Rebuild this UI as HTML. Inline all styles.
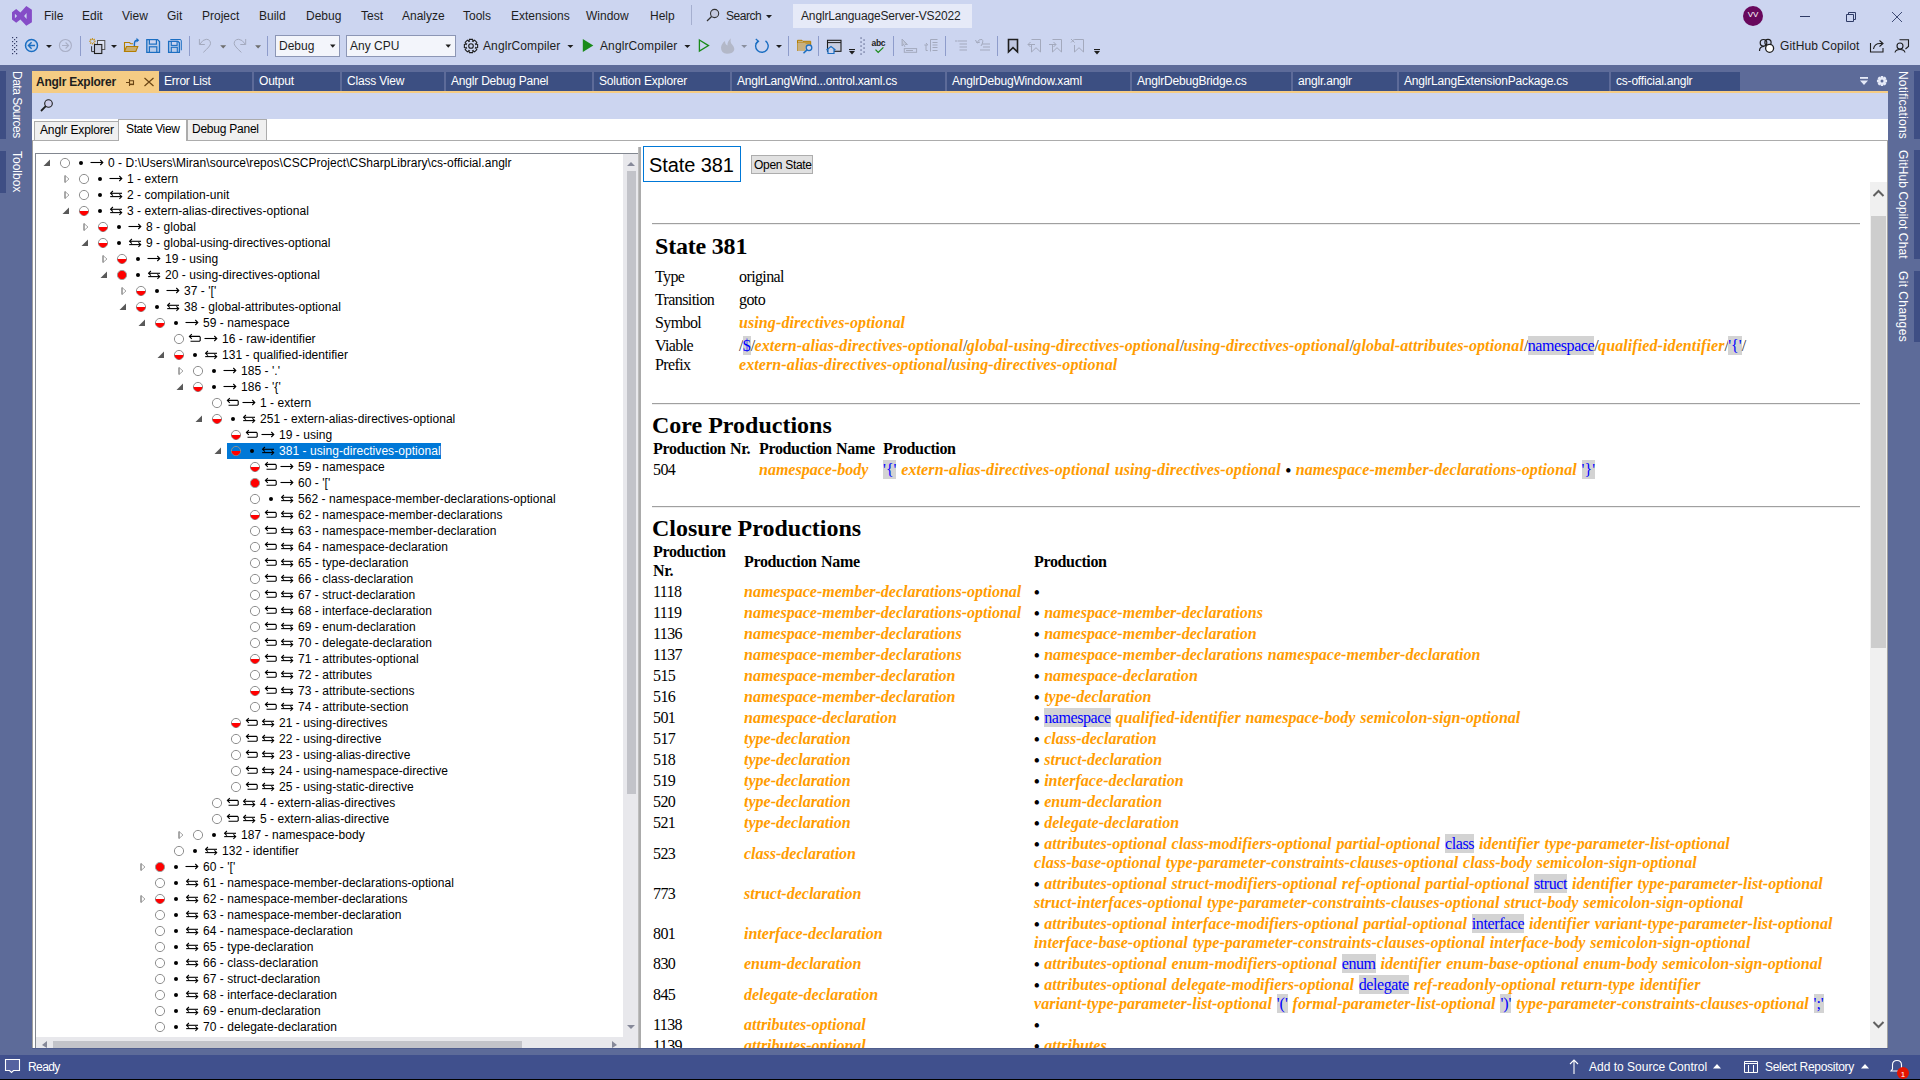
<!DOCTYPE html><html><head><meta charset="utf-8"><style>
*{box-sizing:border-box;margin:0;padding:0}
html,body{width:1920px;height:1080px;overflow:hidden;background:#CCD5F0;font-family:"Liberation Sans",sans-serif;font-size:12px;color:#1E1E1E;position:relative}
.a{position:absolute}
.t{position:absolute;white-space:pre;line-height:16px}
.vt{position:absolute;writing-mode:vertical-rl;white-space:pre;font-size:12px;color:#fff;line-height:12px}
.tab{position:absolute;top:72px;height:19px;background:#3C4F82;color:#fff;line-height:19px;padding-left:5px;white-space:pre;overflow:hidden;letter-spacing:-0.2px}
.tr{position:absolute;height:16px;line-height:16px;white-space:pre;color:#000;font-size:12px;letter-spacing:0.05px}
.sr{position:absolute;white-space:pre;font-family:"Liberation Serif",serif;font-size:16px;line-height:19px;color:#000;word-spacing:0.8px}
.ob{font-weight:bold;font-style:italic;color:#FF9C00;letter-spacing:var(--ls,0.1px)}
.bu{font-size:16px;line-height:16px;letter-spacing:-0.3px;position:relative;top:1px;font-weight:bold}
.tm{color:#0000FF;background:#D3D3D3;display:inline-block;height:19px;line-height:19px;vertical-align:top}
.tw{letter-spacing:-0.4px}
.tms{color:#0000FF;background:#D3D3D3;letter-spacing:-0.5px}
</style></head><body><div class="a" style="left:0;top:65px;width:1920px;height:990px;background:#5D6B99"></div><div class="a" style="left:0;top:1055px;width:1920px;height:25px;background:#40508D"></div><div class="a" style="left:0;top:71px;width:6px;height:68px;background:#3E4E84"></div><div class="a" style="left:0;top:151px;width:6px;height:42px;background:#3E4E84"></div><div class="vt" style="left:11px;top:71px;letter-spacing:-0.5px">Data Sources</div><div class="vt" style="left:11px;top:151px">Toolbox</div><div class="a" style="left:1914px;top:71px;width:6px;height:68px;background:#3E4E84"></div><div class="vt" style="left:1897px;top:71px;letter-spacing:0.2px">Notifications</div><div class="a" style="left:1914px;top:150px;width:6px;height:109px;background:#3E4E84"></div><div class="vt" style="left:1897px;top:150px;letter-spacing:0.1px">GitHub Copilot Chat</div><div class="a" style="left:1914px;top:271px;width:6px;height:71px;background:#3E4E84"></div><div class="vt" style="left:1897px;top:271px;letter-spacing:0.4px">Git Changes</div><div class="a" style="left:32px;top:71px;width:127px;height:22px;background:#F5CC84"></div><div class="t" style="left:36px;top:74px;color:#1E1E1E;font-weight:bold;letter-spacing:-0.25px">Anglr Explorer</div><div class="tab" style="left:159px;width:93px">Error List</div><div class="tab" style="left:254px;width:86px">Output</div><div class="tab" style="left:342px;width:102px">Class View</div><div class="tab" style="left:446px;width:146px">Anglr Debug Panel</div><div class="tab" style="left:594px;width:136px">Solution Explorer</div><div class="tab" style="left:732px;width:213px">AnglrLangWind...ontrol.xaml.cs</div><div class="tab" style="left:947px;width:183px">AnglrDebugWindow.xaml</div><div class="tab" style="left:1132px;width:159px">AnglrDebugBridge.cs</div><div class="tab" style="left:1293px;width:104px">anglr.anglr</div><div class="tab" style="left:1399px;width:210px">AnglrLangExtensionPackage.cs</div><div class="tab" style="left:1611px;width:129px">cs-official.anglr</div><div class="a" style="left:32px;top:91px;width:1856px;height:2px;background:#F5CC84"></div><div class="a" style="left:32px;top:93px;width:1856px;height:26px;background:#CCD5F0"></div><div class="a" style="left:32px;top:119px;width:1856px;height:929px;background:#fff"></div><div class="a" style="left:1887px;top:140px;width:1px;height:908px;background:#A0A0A0"></div><div class="a" style="left:32px;top:140px;width:1px;height:908px;background:#A0A0A0"></div><div class="a" style="left:32px;top:140px;width:1856px;height:1px;background:#ACACAC"></div><div class="a" style="left:34px;top:121px;width:85px;height:20px;background:#F0F0F0;border:1px solid #ACACAC"></div><div class="a" style="left:187px;top:119px;width:80px;height:22px;background:#F0F0F0;border:1px solid #ACACAC"></div><div class="a" style="left:118px;top:119px;width:69px;height:22px;background:#fff;border:1px solid #ACACAC;border-bottom:none"></div><div class="t" style="left:40px;top:122px;color:#000;letter-spacing:-0.15px">Anglr Explorer</div><div class="t" style="left:126px;top:121px;color:#000;letter-spacing:-0.36px">State View</div><div class="t" style="left:192px;top:121px;color:#000;letter-spacing:-0.24px">Debug Panel</div><div class="a" style="left:35px;top:153px;width:603px;height:895px;border:1px solid #828790;border-right:none;border-bottom:none"></div><div class="a" style="left:638px;top:147px;width:3px;height:901px;background:#ABABAB;border-left:1px solid #BDBDBD"></div><div class="t" style="left:28px;top:1059px;color:#fff;font-size:12px;letter-spacing:-0.6px">Ready</div><svg width="0" height="0" style="position:absolute"><defs>
<g id="ex"><polygon points="0.5,11 7,11 7,4.5" fill="#595959"/></g>
<g id="co"><polygon points="3,4.5 3,11.5 7,8" fill="none" stroke="#A6A6A6" stroke-width="1"/><path d="M3,4.5 V11.5" stroke="#808080" stroke-width="1"/></g>
<g id="c0"><circle cx="22" cy="8" r="4.6" fill="none" stroke="#8F8F8F" stroke-width="1"/></g>
<g id="c1"><circle cx="22" cy="8" r="4.6" fill="none" stroke="#8F8F8F" stroke-width="1"/><path d="M17.6,8 H26.4 A4.4,4.4 0 0 1 17.6,8 Z" fill="#FF0000"/></g>
<g id="c2"><circle cx="22" cy="8" r="4.6" fill="#FF0000" stroke="#9A9A9A" stroke-width="1"/></g>
<g id="dt"><circle cx="38" cy="8" r="2" fill="#000"/></g>
<g id="bk" fill="none" stroke="#000" stroke-width="1.1"><path d="M32.5,5.4 H42.4 L43.2,6.2 V9.5 L42.4,10.3 H33.5"/><path d="M34.8,3.2 L32.4,5.5 L34.8,7.8"/></g>
<g id="ar" fill="none" stroke="#000" stroke-width="1.1"><path d="M47.5,7.5 H59.6"/><path d="M57.3,5 L59.8,7.5 L57.3,10"/></g>
<g id="db" fill="none" stroke="#000" stroke-width="1.1"><path d="M48.6,6.3 H60"/><path d="M50.9,4 L48.6,6.3 L50.9,8.6"/><path d="M48.2,9.6 H59.7"/><path d="M57.4,7.3 L59.7,9.6 L57.4,11.9"/></g>
</defs></svg><div class="a" style="left:227px;top:443px;width:214px;height:16px;background:#0078D7"></div><div class="a" style="left:36px;top:154px;width:587px;height:883px;overflow:hidden"><div class="a" style="left:-36px;top:-154px;width:640px;height:1048px"><div class="tr" style="left:108px;top:155px;color:#000">0 - D:\Users\Miran\source\repos\CSCProject\CSharpLibrary\cs-official.anglr</div><div class="tr" style="left:127px;top:171px;color:#000">1 - extern</div><div class="tr" style="left:127px;top:187px;color:#000">2 - compilation-unit</div><div class="tr" style="left:127px;top:203px;color:#000">3 - extern-alias-directives-optional</div><div class="tr" style="left:146px;top:219px;color:#000">8 - global</div><div class="tr" style="left:146px;top:235px;color:#000">9 - global-using-directives-optional</div><div class="tr" style="left:165px;top:251px;color:#000">19 - using</div><div class="tr" style="left:165px;top:267px;color:#000">20 - using-directives-optional</div><div class="tr" style="left:184px;top:283px;color:#000">37 - &#x27;[&#x27;</div><div class="tr" style="left:184px;top:299px;color:#000">38 - global-attributes-optional</div><div class="tr" style="left:203px;top:315px;color:#000">59 - namespace</div><div class="tr" style="left:222px;top:331px;color:#000">16 - raw-identifier</div><div class="tr" style="left:222px;top:347px;color:#000">131 - qualified-identifier</div><div class="tr" style="left:241px;top:363px;color:#000">185 - &#x27;.&#x27;</div><div class="tr" style="left:241px;top:379px;color:#000">186 - &#x27;{&#x27;</div><div class="tr" style="left:260px;top:395px;color:#000">1 - extern</div><div class="tr" style="left:260px;top:411px;color:#000">251 - extern-alias-directives-optional</div><div class="tr" style="left:279px;top:427px;color:#000">19 - using</div><div class="tr" style="left:279px;top:443px;color:#fff">381 - using-directives-optional</div><div class="tr" style="left:298px;top:459px;color:#000">59 - namespace</div><div class="tr" style="left:298px;top:475px;color:#000">60 - &#x27;[&#x27;</div><div class="tr" style="left:298px;top:491px;color:#000">562 - namespace-member-declarations-optional</div><div class="tr" style="left:298px;top:507px;color:#000">62 - namespace-member-declarations</div><div class="tr" style="left:298px;top:523px;color:#000">63 - namespace-member-declaration</div><div class="tr" style="left:298px;top:539px;color:#000">64 - namespace-declaration</div><div class="tr" style="left:298px;top:555px;color:#000">65 - type-declaration</div><div class="tr" style="left:298px;top:571px;color:#000">66 - class-declaration</div><div class="tr" style="left:298px;top:587px;color:#000">67 - struct-declaration</div><div class="tr" style="left:298px;top:603px;color:#000">68 - interface-declaration</div><div class="tr" style="left:298px;top:619px;color:#000">69 - enum-declaration</div><div class="tr" style="left:298px;top:635px;color:#000">70 - delegate-declaration</div><div class="tr" style="left:298px;top:651px;color:#000">71 - attributes-optional</div><div class="tr" style="left:298px;top:667px;color:#000">72 - attributes</div><div class="tr" style="left:298px;top:683px;color:#000">73 - attribute-sections</div><div class="tr" style="left:298px;top:699px;color:#000">74 - attribute-section</div><div class="tr" style="left:279px;top:715px;color:#000">21 - using-directives</div><div class="tr" style="left:279px;top:731px;color:#000">22 - using-directive</div><div class="tr" style="left:279px;top:747px;color:#000">23 - using-alias-directive</div><div class="tr" style="left:279px;top:763px;color:#000">24 - using-namespace-directive</div><div class="tr" style="left:279px;top:779px;color:#000">25 - using-static-directive</div><div class="tr" style="left:260px;top:795px;color:#000">4 - extern-alias-directives</div><div class="tr" style="left:260px;top:811px;color:#000">5 - extern-alias-directive</div><div class="tr" style="left:241px;top:827px;color:#000">187 - namespace-body</div><div class="tr" style="left:222px;top:843px;color:#000">132 - identifier</div><div class="tr" style="left:203px;top:859px;color:#000">60 - &#x27;[&#x27;</div><div class="tr" style="left:203px;top:875px;color:#000">61 - namespace-member-declarations-optional</div><div class="tr" style="left:203px;top:891px;color:#000">62 - namespace-member-declarations</div><div class="tr" style="left:203px;top:907px;color:#000">63 - namespace-member-declaration</div><div class="tr" style="left:203px;top:923px;color:#000">64 - namespace-declaration</div><div class="tr" style="left:203px;top:939px;color:#000">65 - type-declaration</div><div class="tr" style="left:203px;top:955px;color:#000">66 - class-declaration</div><div class="tr" style="left:203px;top:971px;color:#000">67 - struct-declaration</div><div class="tr" style="left:203px;top:987px;color:#000">68 - interface-declaration</div><div class="tr" style="left:203px;top:1003px;color:#000">69 - enum-declaration</div><div class="tr" style="left:203px;top:1019px;color:#000">70 - delegate-declaration</div><svg class="a" style="left:0;top:0" width="640" height="1048"><g transform="translate(43,155)"><use href="#ex"/><use href="#c0"/><use href="#dt"/><use href="#ar"/></g><g transform="translate(62,171)"><use href="#co"/><use href="#c0"/><use href="#dt"/><use href="#ar"/></g><g transform="translate(62,187)"><use href="#co"/><use href="#c0"/><use href="#dt"/><use href="#db"/></g><g transform="translate(62,203)"><use href="#ex"/><use href="#c1"/><use href="#dt"/><use href="#db"/></g><g transform="translate(81,219)"><use href="#co"/><use href="#c1"/><use href="#dt"/><use href="#ar"/></g><g transform="translate(81,235)"><use href="#ex"/><use href="#c1"/><use href="#dt"/><use href="#db"/></g><g transform="translate(100,251)"><use href="#co"/><use href="#c1"/><use href="#dt"/><use href="#ar"/></g><g transform="translate(100,267)"><use href="#ex"/><use href="#c2"/><use href="#dt"/><use href="#db"/></g><g transform="translate(119,283)"><use href="#co"/><use href="#c1"/><use href="#dt"/><use href="#ar"/></g><g transform="translate(119,299)"><use href="#ex"/><use href="#c1"/><use href="#dt"/><use href="#db"/></g><g transform="translate(138,315)"><use href="#ex"/><use href="#c1"/><use href="#dt"/><use href="#ar"/></g><g transform="translate(157,331)"><use href="#c0"/><use href="#bk"/><use href="#ar"/></g><g transform="translate(157,347)"><use href="#ex"/><use href="#c1"/><use href="#dt"/><use href="#db"/></g><g transform="translate(176,363)"><use href="#co"/><use href="#c0"/><use href="#dt"/><use href="#ar"/></g><g transform="translate(176,379)"><use href="#ex"/><use href="#c1"/><use href="#dt"/><use href="#ar"/></g><g transform="translate(195,395)"><use href="#c0"/><use href="#bk"/><use href="#ar"/></g><g transform="translate(195,411)"><use href="#ex"/><use href="#c1"/><use href="#dt"/><use href="#db"/></g><g transform="translate(214,427)"><use href="#c1"/><use href="#bk"/><use href="#ar"/></g><g transform="translate(214,443)"><use href="#ex"/><use href="#c1"/><use href="#dt"/><use href="#db"/></g><g transform="translate(233,459)"><use href="#c1"/><use href="#bk"/><use href="#ar"/></g><g transform="translate(233,475)"><use href="#c2"/><use href="#bk"/><use href="#ar"/></g><g transform="translate(233,491)"><use href="#c0"/><use href="#dt"/><use href="#db"/></g><g transform="translate(233,507)"><use href="#c1"/><use href="#bk"/><use href="#db"/></g><g transform="translate(233,523)"><use href="#c0"/><use href="#bk"/><use href="#db"/></g><g transform="translate(233,539)"><use href="#c0"/><use href="#bk"/><use href="#db"/></g><g transform="translate(233,555)"><use href="#c0"/><use href="#bk"/><use href="#db"/></g><g transform="translate(233,571)"><use href="#c0"/><use href="#bk"/><use href="#db"/></g><g transform="translate(233,587)"><use href="#c0"/><use href="#bk"/><use href="#db"/></g><g transform="translate(233,603)"><use href="#c0"/><use href="#bk"/><use href="#db"/></g><g transform="translate(233,619)"><use href="#c0"/><use href="#bk"/><use href="#db"/></g><g transform="translate(233,635)"><use href="#c0"/><use href="#bk"/><use href="#db"/></g><g transform="translate(233,651)"><use href="#c1"/><use href="#bk"/><use href="#db"/></g><g transform="translate(233,667)"><use href="#c0"/><use href="#bk"/><use href="#db"/></g><g transform="translate(233,683)"><use href="#c1"/><use href="#bk"/><use href="#db"/></g><g transform="translate(233,699)"><use href="#c0"/><use href="#bk"/><use href="#db"/></g><g transform="translate(214,715)"><use href="#c1"/><use href="#bk"/><use href="#db"/></g><g transform="translate(214,731)"><use href="#c0"/><use href="#bk"/><use href="#db"/></g><g transform="translate(214,747)"><use href="#c0"/><use href="#bk"/><use href="#db"/></g><g transform="translate(214,763)"><use href="#c0"/><use href="#bk"/><use href="#db"/></g><g transform="translate(214,779)"><use href="#c0"/><use href="#bk"/><use href="#db"/></g><g transform="translate(195,795)"><use href="#c0"/><use href="#bk"/><use href="#db"/></g><g transform="translate(195,811)"><use href="#c0"/><use href="#bk"/><use href="#db"/></g><g transform="translate(176,827)"><use href="#co"/><use href="#c0"/><use href="#dt"/><use href="#db"/></g><g transform="translate(157,843)"><use href="#c0"/><use href="#dt"/><use href="#db"/></g><g transform="translate(138,859)"><use href="#co"/><use href="#c2"/><use href="#dt"/><use href="#ar"/></g><g transform="translate(138,875)"><use href="#c0"/><use href="#dt"/><use href="#db"/></g><g transform="translate(138,891)"><use href="#co"/><use href="#c1"/><use href="#dt"/><use href="#db"/></g><g transform="translate(138,907)"><use href="#c0"/><use href="#dt"/><use href="#db"/></g><g transform="translate(138,923)"><use href="#c0"/><use href="#dt"/><use href="#db"/></g><g transform="translate(138,939)"><use href="#c0"/><use href="#dt"/><use href="#db"/></g><g transform="translate(138,955)"><use href="#c0"/><use href="#dt"/><use href="#db"/></g><g transform="translate(138,971)"><use href="#c0"/><use href="#dt"/><use href="#db"/></g><g transform="translate(138,987)"><use href="#c0"/><use href="#dt"/><use href="#db"/></g><g transform="translate(138,1003)"><use href="#c0"/><use href="#dt"/><use href="#db"/></g><g transform="translate(138,1019)"><use href="#c0"/><use href="#dt"/><use href="#db"/></g></svg></div></div><div class="a" style="left:623px;top:154px;width:15px;height:883px;background:#E8E8EC"></div><div class="a" style="left:627px;top:171px;width:9px;height:623px;background:#C2C3C9"></div><svg class="a" style="left:623px;top:154px" width="16" height="20"><polygon points="4,12 12,12 8,8" fill="#868999"/></svg><svg class="a" style="left:623px;top:1020px" width="16" height="17"><polygon points="4,5 12,5 8,9" fill="#868999"/></svg><div class="a" style="left:36px;top:1037px;width:602px;height:11px;background:#E8E8EC"></div><div class="a" style="left:53px;top:1041px;width:469px;height:7px;background:#C2C3C9"></div><svg class="a" style="left:36px;top:1037px" width="16" height="11"><polygon points="11,4 11,11 6,8" fill="#868999"/></svg><svg class="a" style="left:606px;top:1037px" width="16" height="11"><polygon points="6,4 6,11 11,8" fill="#868999"/></svg><div class="a" style="left:643px;top:146px;width:98px;height:36px;border:1px solid #0078D7;background:#fff"></div><div class="t" style="left:649px;top:153px;font-size:20px;line-height:24px;color:#000;letter-spacing:-0.1px">State 381</div><div class="a" style="left:751px;top:155px;width:62px;height:19px;border:1px solid #ADADAD;background:#E1E1E1"></div><div class="t" style="left:754px;top:157px;color:#000;font-size:12px;letter-spacing:-0.3px">Open State</div><div class="a" style="left:1870px;top:182px;width:17px;height:866px;background:#F0F0F0"></div><div class="a" style="left:1871px;top:216px;width:15px;height:432px;background:#CDCDCD"></div><svg class="a" style="left:1870px;top:182px" width="17" height="34"><path d="M3.5,14 L8.5,9 L13.5,14" fill="none" stroke="#606060" stroke-width="2"/></svg><svg class="a" style="left:1870px;top:1014px" width="17" height="34"><path d="M3.5,8 L8.5,13 L13.5,8" fill="none" stroke="#606060" stroke-width="2"/></svg><div class="a" style="left:652px;top:223px;width:1208px;height:2px;border-top:1px solid #A0A0A0;border-bottom:1px solid #EEEEEE"></div><div class="a" style="left:652px;top:403px;width:1208px;height:2px;border-top:1px solid #A0A0A0;border-bottom:1px solid #EEEEEE"></div><div class="a" style="left:652px;top:506px;width:1208px;height:2px;border-top:1px solid #A0A0A0;border-bottom:1px solid #EEEEEE"></div><div class="sr" style="left:655px;top:232px;font-size:24px;line-height:28px;font-weight:bold;word-spacing:0;letter-spacing:-0.2px">State 381</div><div class="sr" style="left:652px;top:411px;font-size:24px;line-height:28px;font-weight:bold;word-spacing:0">Core Productions</div><div class="sr" style="left:652px;top:514px;font-size:24px;line-height:28px;font-weight:bold;word-spacing:0">Closure Productions</div><div class="sr" style="left:655px;top:267px;letter-spacing:-0.6px">Type</div><div class="sr" style="left:739px;top:267px;letter-spacing:-0.6px">original</div><div class="sr" style="left:655px;top:290px;letter-spacing:-0.6px">Transition</div><div class="sr" style="left:739px;top:290px;letter-spacing:-0.6px">goto</div><div class="sr" style="left:655px;top:313px;letter-spacing:-0.6px">Symbol</div><div class="sr" style="left:739px;top:313px;"><span class="ob">using-directives-optional</span></div><div class="sr" style="left:655px;top:336px;letter-spacing:-0.6px">Viable</div><div class="sr" style="left:655px;top:355px;letter-spacing:-0.6px">Prefix</div><div class="sr" style="left:739px;top:336px;"><span style="color:#333;letter-spacing:-0.7px">/</span><span class="tm">$</span><span style="color:#333;letter-spacing:-0.7px">/</span><span class="ob">extern-alias-directives-optional</span><span style="color:#333;letter-spacing:-0.7px">/</span><span class="ob">global-using-directives-optional</span><span style="color:#333;letter-spacing:-0.7px">/</span><span class="ob">using-directives-optional</span><span style="color:#333;letter-spacing:-0.7px">/</span><span class="ob">global-attributes-optional</span><span style="color:#333;letter-spacing:-0.7px">/</span><span class="tm tw">namespace</span><span style="color:#333;letter-spacing:-0.7px">/</span><span class="ob">qualified-identifier</span><span style="color:#333;letter-spacing:-0.7px">/</span><span class="tm">&#x27;{&#x27;</span><span style="color:#333;letter-spacing:-0.7px">/</span></div><div class="sr" style="left:739px;top:355px;"><span class="ob">extern-alias-directives-optional</span><span style="color:#333;letter-spacing:-0.7px">/</span><span class="ob">using-directives-optional</span></div><div class="sr" style="left:653px;top:439px;font-weight:bold;letter-spacing:-0.35px">Production Nr.</div><div class="sr" style="left:759px;top:439px;font-weight:bold;letter-spacing:-0.35px">Production Name</div><div class="sr" style="left:883px;top:439px;font-weight:bold;letter-spacing:-0.35px">Production</div><div class="sr" style="left:653px;top:460px;letter-spacing:-0.6px">504</div><div class="sr" style="left:759px;top:460px;"><span class="ob" style="letter-spacing:0">namespace-body</span></div><div class="sr" style="left:883px;top:460px;"><span class="tm">&#x27;{&#x27;</span> <span class="ob">extern-alias-directives-optional using-directives-optional</span> <span class="bu">•</span> <span class="ob">namespace-member-declarations-optional</span> <span class="tm">&#x27;}&#x27;</span></div><div class="sr" style="left:653px;top:542px;font-weight:bold;letter-spacing:-0.35px">Production</div><div class="sr" style="left:653px;top:561px;font-weight:bold;letter-spacing:-0.35px">Nr.</div><div class="sr" style="left:744px;top:552px;font-weight:bold;letter-spacing:-0.35px">Production Name</div><div class="sr" style="left:1034px;top:552px;font-weight:bold;letter-spacing:-0.35px">Production</div><div class="a" style="left:643px;top:182px;width:1227px;height:866px;overflow:hidden"><div class="a" style="left:-643px;top:-182px;width:1920px;height:1080px"><div class="sr" style="left:653px;top:582px;letter-spacing:-0.6px">1118</div><div class="sr" style="left:744px;top:582px;"><span class="ob" style="letter-spacing:0">namespace-member-declarations-optional</span></div><div class="sr" style="left:1034px;top:582px;--ls:0.04px"><span class="bu">•</span> </div><div class="sr" style="left:653px;top:603px;letter-spacing:-0.6px">1119</div><div class="sr" style="left:744px;top:603px;"><span class="ob" style="letter-spacing:0">namespace-member-declarations-optional</span></div><div class="sr" style="left:1034px;top:603px;--ls:0.04px"><span class="bu">•</span> <span class="ob">namespace-member-declarations</span></div><div class="sr" style="left:653px;top:624px;letter-spacing:-0.6px">1136</div><div class="sr" style="left:744px;top:624px;"><span class="ob" style="letter-spacing:0">namespace-member-declarations</span></div><div class="sr" style="left:1034px;top:624px;--ls:0.04px"><span class="bu">•</span> <span class="ob">namespace-member-declaration</span></div><div class="sr" style="left:653px;top:645px;letter-spacing:-0.6px">1137</div><div class="sr" style="left:744px;top:645px;"><span class="ob" style="letter-spacing:0">namespace-member-declarations</span></div><div class="sr" style="left:1034px;top:645px;--ls:0.04px"><span class="bu">•</span> <span class="ob">namespace-member-declarations namespace-member-declaration</span></div><div class="sr" style="left:653px;top:666px;letter-spacing:-0.6px">515</div><div class="sr" style="left:744px;top:666px;"><span class="ob" style="letter-spacing:0">namespace-member-declaration</span></div><div class="sr" style="left:1034px;top:666px;--ls:0.04px"><span class="bu">•</span> <span class="ob">namespace-declaration</span></div><div class="sr" style="left:653px;top:687px;letter-spacing:-0.6px">516</div><div class="sr" style="left:744px;top:687px;"><span class="ob" style="letter-spacing:0">namespace-member-declaration</span></div><div class="sr" style="left:1034px;top:687px;--ls:0.04px"><span class="bu">•</span> <span class="ob">type-declaration</span></div><div class="sr" style="left:653px;top:708px;letter-spacing:-0.6px">501</div><div class="sr" style="left:744px;top:708px;"><span class="ob" style="letter-spacing:0">namespace-declaration</span></div><div class="sr" style="left:1034px;top:708px;--ls:0.04px"><span class="bu">•</span> <span class="tm tw">namespace</span> <span class="ob">qualified-identifier namespace-body semicolon-sign-optional</span></div><div class="sr" style="left:653px;top:729px;letter-spacing:-0.6px">517</div><div class="sr" style="left:744px;top:729px;"><span class="ob" style="letter-spacing:0">type-declaration</span></div><div class="sr" style="left:1034px;top:729px;--ls:0.04px"><span class="bu">•</span> <span class="ob">class-declaration</span></div><div class="sr" style="left:653px;top:750px;letter-spacing:-0.6px">518</div><div class="sr" style="left:744px;top:750px;"><span class="ob" style="letter-spacing:0">type-declaration</span></div><div class="sr" style="left:1034px;top:750px;--ls:0.04px"><span class="bu">•</span> <span class="ob">struct-declaration</span></div><div class="sr" style="left:653px;top:771px;letter-spacing:-0.6px">519</div><div class="sr" style="left:744px;top:771px;"><span class="ob" style="letter-spacing:0">type-declaration</span></div><div class="sr" style="left:1034px;top:771px;--ls:0.04px"><span class="bu">•</span> <span class="ob">interface-declaration</span></div><div class="sr" style="left:653px;top:792px;letter-spacing:-0.6px">520</div><div class="sr" style="left:744px;top:792px;"><span class="ob" style="letter-spacing:0">type-declaration</span></div><div class="sr" style="left:1034px;top:792px;--ls:0.04px"><span class="bu">•</span> <span class="ob">enum-declaration</span></div><div class="sr" style="left:653px;top:813px;letter-spacing:-0.6px">521</div><div class="sr" style="left:744px;top:813px;"><span class="ob" style="letter-spacing:0">type-declaration</span></div><div class="sr" style="left:1034px;top:813px;--ls:0.04px"><span class="bu">•</span> <span class="ob">delegate-declaration</span></div><div class="sr" style="left:653px;top:844px;letter-spacing:-0.6px">523</div><div class="sr" style="left:744px;top:844px;"><span class="ob" style="letter-spacing:0">class-declaration</span></div><div class="sr" style="left:1034px;top:834px;--ls:0.04px"><span class="bu">•</span> <span class="ob">attributes-optional class-modifiers-optional partial-optional</span> <span class="tm tw">class</span> <span class="ob">identifier type-parameter-list-optional</span></div><div class="sr" style="left:1034px;top:853px;--ls:0.04px"><span class="ob">class-base-optional type-parameter-constraints-clauses-optional class-body semicolon-sign-optional</span></div><div class="sr" style="left:653px;top:884px;letter-spacing:-0.6px">773</div><div class="sr" style="left:744px;top:884px;"><span class="ob" style="letter-spacing:0">struct-declaration</span></div><div class="sr" style="left:1034px;top:874px;--ls:0.04px"><span class="bu">•</span> <span class="ob">attributes-optional struct-modifiers-optional ref-optional partial-optional</span> <span class="tm tw">struct</span> <span class="ob">identifier type-parameter-list-optional</span></div><div class="sr" style="left:1034px;top:893px;--ls:0.04px"><span class="ob">struct-interfaces-optional type-parameter-constraints-clauses-optional struct-body semicolon-sign-optional</span></div><div class="sr" style="left:653px;top:924px;letter-spacing:-0.6px">801</div><div class="sr" style="left:744px;top:924px;"><span class="ob" style="letter-spacing:0">interface-declaration</span></div><div class="sr" style="left:1034px;top:914px;--ls:0.04px"><span class="bu">•</span> <span class="ob">attributes-optional interface-modifiers-optional partial-optional</span> <span class="tm tw">interface</span> <span class="ob">identifier variant-type-parameter-list-optional</span></div><div class="sr" style="left:1034px;top:933px;--ls:0.04px"><span class="ob">interface-base-optional type-parameter-constraints-clauses-optional interface-body semicolon-sign-optional</span></div><div class="sr" style="left:653px;top:954px;letter-spacing:-0.6px">830</div><div class="sr" style="left:744px;top:954px;"><span class="ob" style="letter-spacing:0">enum-declaration</span></div><div class="sr" style="left:1034px;top:954px;--ls:0.04px"><span class="bu">•</span> <span class="ob">attributes-optional enum-modifiers-optional</span> <span class="tm tw">enum</span> <span class="ob">identifier enum-base-optional enum-body semicolon-sign-optional</span></div><div class="sr" style="left:653px;top:985px;letter-spacing:-0.6px">845</div><div class="sr" style="left:744px;top:985px;"><span class="ob" style="letter-spacing:0">delegate-declaration</span></div><div class="sr" style="left:1034px;top:975px;--ls:0.04px"><span class="bu">•</span> <span class="ob">attributes-optional delegate-modifiers-optional</span> <span class="tm tw">delegate</span> <span class="ob">ref-readonly-optional return-type identifier</span></div><div class="sr" style="left:1034px;top:994px;--ls:0.04px"><span class="ob">variant-type-parameter-list-optional</span> <span class="tm">&#x27;(&#x27;</span> <span class="ob">formal-parameter-list-optional</span> <span class="tm">&#x27;)&#x27;</span> <span class="ob">type-parameter-constraints-clauses-optional</span> <span class="tm">&#x27;;&#x27;</span></div><div class="sr" style="left:653px;top:1015px;letter-spacing:-0.6px">1138</div><div class="sr" style="left:744px;top:1015px;"><span class="ob" style="letter-spacing:0">attributes-optional</span></div><div class="sr" style="left:1034px;top:1015px;--ls:0.04px"><span class="bu">•</span> </div><div class="sr" style="left:653px;top:1036px;letter-spacing:-0.6px">1139</div><div class="sr" style="left:744px;top:1036px;"><span class="ob" style="letter-spacing:0">attributes-optional</span></div><div class="sr" style="left:1034px;top:1036px;--ls:0.04px"><span class="bu">•</span> <span class="ob">attributes</span></div></div></div><svg class="a" style="left:0;top:0" width="40" height="31"><path fill="#854CC7" fill-rule="evenodd" d="M16.2,9 L20.4,12.4 L26.3,6 L31.9,9.8 L31.9,22.2 L26.3,25.7 L20.4,19.6 L16.2,22.7 L12,19.6 L12,12.2 Z M14.9,13.8 V18.2 L17.1,16 Z M26.6,13 V19 L24.1,16 Z"/></svg><div class="t" style="left:44px;top:8px;color:#1E1E1E">File</div><div class="t" style="left:82px;top:8px;color:#1E1E1E">Edit</div><div class="t" style="left:122px;top:8px;color:#1E1E1E">View</div><div class="t" style="left:167px;top:8px;color:#1E1E1E">Git</div><div class="t" style="left:202px;top:8px;color:#1E1E1E">Project</div><div class="t" style="left:259px;top:8px;color:#1E1E1E">Build</div><div class="t" style="left:306px;top:8px;color:#1E1E1E">Debug</div><div class="t" style="left:361px;top:8px;color:#1E1E1E">Test</div><div class="t" style="left:402px;top:8px;color:#1E1E1E">Analyze</div><div class="t" style="left:463px;top:8px;color:#1E1E1E">Tools</div><div class="t" style="left:511px;top:8px;color:#1E1E1E">Extensions</div><div class="t" style="left:586px;top:8px;color:#1E1E1E">Window</div><div class="t" style="left:650px;top:8px;color:#1E1E1E">Help</div><div class="a" style="left:691px;top:5px;width:1px;height:20px;background:#A5AFCF"></div><div class="t" style="left:726px;top:8px;color:#1E1E1E;letter-spacing:-0.45px">Search</div><div class="a" style="left:793px;top:4px;width:179px;height:24px;background:#E6EAF8"></div><div class="t" style="left:801px;top:8px;color:#1E1E1E;letter-spacing:-0.15px">AnglrLanguageServer-VS2022</div><div class="a" style="left:1743px;top:6px;width:20px;height:20px;border-radius:50%;background:#68085C"></div><div class="t" style="left:1746px;top:9px;width:14px;text-align:center;font-size:8px;line-height:12px;color:#fff;letter-spacing:0px">VV</div><div class="t" style="left:483px;top:38px;color:#1E1E1E;letter-spacing:0.1px">AnglrCompiler</div><div class="t" style="left:600px;top:38px;color:#1E1E1E;letter-spacing:0.1px">AnglrCompiler</div><div class="t" style="left:1780px;top:38px;color:#1E1E1E;letter-spacing:0.1px">GitHub Copilot</div><div class="a" style="left:275px;top:35px;width:65px;height:22px;background:#F3F5FB;border:1px solid #8C96B5"></div><div class="t" style="left:279px;top:38px;color:#1E1E1E">Debug</div><div class="a" style="left:346px;top:35px;width:110px;height:22px;background:#F3F5FB;border:1px solid #8C96B5"></div><div class="t" style="left:350px;top:38px;color:#1E1E1E">Any CPU</div><svg class="a" style="left:0;top:0" width="1920" height="1080"><circle cx="714.6" cy="13.5" r="4.1" fill="#C5CAE0" stroke="#333" stroke-width="1.1"/><path d="M711.6,16.5 L707,21" stroke="#333" stroke-width="1.2"/><polygon points="766,15 772,15 769.0,18.2" fill="#1E1E1E"/><rect x="1800" y="16" width="10" height="1" fill="#2E3B66"/><path d="M1846.5,14.5 H1853.5 V21.5 H1846.5 Z M1848.5,14.5 V12.5 H1855.5 V19.5 H1853.5" fill="none" stroke="#2E3B66" stroke-width="1"/><path d="M1892,12 L1902,22 M1902,12 L1892,22" stroke="#2E3B66" stroke-width="0.9"/><rect x="12.0" y="37.0" width="1.2" height="1.2" fill="#333C66"/><rect x="12.0" y="41.0" width="1.2" height="1.2" fill="#333C66"/><rect x="12.0" y="45.0" width="1.2" height="1.2" fill="#333C66"/><rect x="12.0" y="49.0" width="1.2" height="1.2" fill="#333C66"/><rect x="12.0" y="53.0" width="1.2" height="1.2" fill="#333C66"/><rect x="16.0" y="37.0" width="1.2" height="1.2" fill="#333C66"/><rect x="16.0" y="41.0" width="1.2" height="1.2" fill="#333C66"/><rect x="16.0" y="45.0" width="1.2" height="1.2" fill="#333C66"/><rect x="16.0" y="49.0" width="1.2" height="1.2" fill="#333C66"/><rect x="16.0" y="53.0" width="1.2" height="1.2" fill="#333C66"/><rect x="14" y="39.0" width="1.2" height="1.2" fill="#333C66"/><rect x="14" y="43.0" width="1.2" height="1.2" fill="#333C66"/><rect x="14" y="47.0" width="1.2" height="1.2" fill="#333C66"/><rect x="14" y="51.0" width="1.2" height="1.2" fill="#333C66"/><circle cx="31.5" cy="45.5" r="6" fill="#C3D3EE" stroke="#1B6EC2" stroke-width="1.5"/><path d="M28.6,45.5 H35 M31.6,42.3 L28.4,45.5 L31.6,48.7" fill="none" stroke="#1B6EC2" stroke-width="1.4"/><polygon points="46,44.9 52,44.9 49.0,48.1" fill="#1E1E1E"/><circle cx="65.4" cy="45.5" r="6" fill="none" stroke="#A9AFC6" stroke-width="1.1"/><path d="M62,45.5 H68.6 M65.6,42.5 L68.6,45.5 L65.6,48.5" fill="none" stroke="#A9AFC6" stroke-width="1.1"/><rect x="80" y="36" width="1" height="20" fill="#8E9CCB"/><g stroke="#C4901A" stroke-width="1.1"><path d="M92.4,38 V44.6 M89.1,41.3 H95.7 M90.1,39 L94.7,43.6 M94.7,39 L90.1,43.6"/></g><circle cx="92.4" cy="41.3" r="1.6" fill="#CCD5F0"/><rect x="97.5" y="40.5" width="7.3" height="9" fill="#DDE2F2" stroke="#555" stroke-width="1"/><path d="M91.6,46.2 V51.6 H94.3" fill="none" stroke="#333" stroke-width="1"/><rect x="94.5" y="44.5" width="7.3" height="9" fill="#C8CDE0" stroke="#1E1E1E" stroke-width="1.1"/><polygon points="111,44.9 117,44.9 114.0,48.1" fill="#1E1E1E"/><path d="M124.5,51.5 V42.5 H129.5 L130.8,43.8 H133" fill="none" stroke="#B47E00" stroke-width="1.1"/><path d="M124.5,51.5 L126.5,46.5 H137.8 L135.8,51.5 Z" fill="#C9AE70" stroke="#B47E00" stroke-width="1.1"/><path d="M134.4,46 V44 Q134.4,40.3 137.5,40.3" fill="none" stroke="#1B6EC2" stroke-width="1.4"/><polygon points="136.5,37.8 139.2,40.3 136.5,42.6" fill="#1B6EC2"/><path d="M146.8,39.6 H157.5 L159.5,41.6 V52.4 H146.8 Z" fill="#B9CCEA" stroke="#1B6EC2" stroke-width="1.3"/><rect x="149.4" y="39.6" width="7" height="4.5" fill="#CCD5F0" stroke="#1B6EC2" stroke-width="1.2"/><rect x="149.4" y="46.8" width="7.4" height="5.6" fill="#B9CCEA" stroke="#1B6EC2" stroke-width="1.2"/><path d="M170.3,39.5 H180 Q181.3,39.5 181.3,40.8 V50.3" fill="none" stroke="#1B6EC2" stroke-width="1"/><path d="M168.6,41.4 H178 L179.4,42.8 V52.4 H168.6 Z" fill="#B9CCEA" stroke="#1B6EC2" stroke-width="1.3"/><rect x="171.3" y="41.4" width="5.8" height="4" fill="#CCD5F0" stroke="#1B6EC2" stroke-width="1.1"/><rect x="171.3" y="47.3" width="6" height="5.1" fill="#B9CCEA" stroke="#1B6EC2" stroke-width="1.1"/><rect x="189" y="36" width="1" height="20" fill="#8E9CCB"/><path d="M199.4,39 V44.5 H204.8 M199.8,44.2 Q203,39.2 206.4,39.3 Q210.5,39.5 210.5,43.6 Q210.5,46 203.3,52.4" fill="none" stroke="#A3A9BD" stroke-width="1"/><polygon points="220.2,45.2 226.2,45.2 223.2,48.400000000000006" fill="#6E6E6E"/><path d="M245.7,39 V44.5 H240.3 M245.3,44.2 Q242,39.2 238.6,39.3 Q234.2,39.5 234.2,43.6 Q234.2,46 241.4,52.4" fill="none" stroke="#A3A9BD" stroke-width="1"/><polygon points="255.1,45.2 261.1,45.2 258.1,48.400000000000006" fill="#6E6E6E"/><rect x="267" y="36" width="1" height="20" fill="#8E9CCB"/><polygon points="330,44.5 335.5,44.5 332.75,47.7" fill="#1E1E1E"/><polygon points="445.5,44.5 451.0,44.5 448.25,47.7" fill="#1E1E1E"/><path d="M475.57,43.96 L477.62,44.44 L477.62,47.56 L475.57,48.04 L475.67,47.79 L476.78,49.58 L474.58,51.78 L472.79,50.67 L473.04,50.57 L472.56,52.62 L469.44,52.62 L468.96,50.57 L469.21,50.67 L467.42,51.78 L465.22,49.58 L466.33,47.79 L466.43,48.04 L464.38,47.56 L464.38,44.44 L466.43,43.96 L466.33,44.21 L465.22,42.42 L467.42,40.22 L469.21,41.33 L468.96,41.43 L469.44,39.38 L472.56,39.38 L473.04,41.43 L472.79,41.33 L474.58,40.22 L476.78,42.42 L475.67,44.21 Z" fill="none" stroke="#1E1E1E" stroke-width="1.1"/><circle cx="471" cy="46" r="2.3" fill="none" stroke="#1E1E1E" stroke-width="1.1"/><polygon points="567.4,44.9 573.4,44.9 570.4,48.1" fill="#1E1E1E"/><polygon points="582.8,38.9 593.3,45.5 582.8,52" fill="#1A8B1A"/><polygon points="684.4,44.9 690.4,44.9 687.4,48.1" fill="#1E1E1E"/><polygon points="699.4,40 708.5,45.6 699.4,51.1" fill="none" stroke="#1A8B1A" stroke-width="1.3"/><path d="M727,53.8 Q721,53.5 721,47.5 Q721.5,43.5 725,41 Q725,44.5 727.5,45.5 Q727,41.5 731,38.3 Q729.5,42 732.5,45 Q735,48 734,50.5 Q732.5,53.8 727,53.8 Z" fill="#B3B8C8"/><polygon points="741.2,44.9 747.2,44.9 744.2,48.1" fill="#8A8F9E"/><path d="M765.5,40.8 A6.3,6.3 0 1 1 757.8,41.2" fill="none" stroke="#1B6EC2" stroke-width="1.4"/><path d="M755.8,39 L758.5,41.3 L755.8,44" fill="none" stroke="#1B6EC2" stroke-width="1.3"/><polygon points="776,44.9 782,44.9 779.0,48.1" fill="#1E1E1E"/><rect x="788" y="36" width="1" height="20" fill="#8E9CCB"/><path d="M797.5,51 V40.3 H802 L803,41.3 H810.7 V45" fill="#C8B080" stroke="#B47E00" stroke-width="1"/><path d="M797.5,43 H810.7" stroke="#B47E00" stroke-width="1"/><rect x="797.5" y="43" width="8" height="8" fill="#C8B080"/><circle cx="809" cy="47.8" r="2.8" fill="#CCD5F0" stroke="#1B6EC2" stroke-width="1.3"/><path d="M807,49.9 L803.5,53.3" stroke="#1B6EC2" stroke-width="1.5"/><rect x="818" y="36" width="1" height="20" fill="#8E9CCB"/><rect x="827.5" y="40.3" width="13.5" height="11" fill="#C8CDE0" stroke="#1E1E1E" stroke-width="1.1"/><path d="M827.5,42.6 H841" stroke="#1E1E1E" stroke-width="1"/><path d="M826.5,50 L831,46.5 L835.5,50 M828,49 V53.5 H834 V49" fill="#CCD5F0" stroke="#1B6EC2" stroke-width="1.2"/><rect x="849" y="49" width="6" height="1.1" fill="#1E1E1E"/><polygon points="849,51 855,51 852,54.6" fill="#1E1E1E"/><rect x="860.5" y="37.5" width="1.1" height="1.1" fill="#333C66"/><rect x="863.5" y="39.5" width="1.1" height="1.1" fill="#333C66"/><rect x="860.5" y="41.5" width="1.1" height="1.1" fill="#333C66"/><rect x="863.5" y="43.5" width="1.1" height="1.1" fill="#333C66"/><rect x="860.5" y="45.5" width="1.1" height="1.1" fill="#333C66"/><rect x="863.5" y="47.5" width="1.1" height="1.1" fill="#333C66"/><rect x="860.5" y="49.5" width="1.1" height="1.1" fill="#333C66"/><rect x="863.5" y="51.5" width="1.1" height="1.1" fill="#333C66"/><rect x="860.5" y="53.5" width="1.1" height="1.1" fill="#333C66"/><text x="871.5" y="46" font-family="Liberation Sans" font-size="8.5" font-weight="bold" fill="#1E1E1E" letter-spacing="-0.3">abc</text><path d="M875.5,49.6 L878.2,52.4 L883.4,47.4" fill="none" stroke="#1A8B1A" stroke-width="1.3"/><rect x="893" y="36" width="1" height="20" fill="#8E9CCB"/><path d="M902,39 V46 L903.8,44.4 L905,47 M902,39 L907.5,44.5 H905" fill="#B8BED0" stroke="#A3A9BD" stroke-width="0.9"/><rect x="904.3" y="48.6" width="12.3" height="3.7" fill="none" stroke="#A3A9BD" stroke-width="1"/><path d="M906,50.5 H913" stroke="#A3A9BD"/><path d="M926,45 V50.5 H927.7 M924.3,45 H927.7 L926,43 M930.5,39.5 V51.5 M930.5,39.5 H937.5 M932.5,42.5 H937.5 M932.5,45 H937.5 M932.5,47.5 H937.5 M932.5,50.5 H937.5" fill="none" stroke="#A3A9BD" stroke-width="1"/><rect x="945" y="36" width="1" height="20" fill="#8E9CCB"/><path d="M955,41 H957.5 M958,41 H967 M959.5,44 H967 M959.5,47 H967 M959.5,50 H967" fill="none" stroke="#A3A9BD" stroke-width="1"/><path d="M977,43 L975.5,40 M977,43 L980,42 M977,42.8 Q979,38.5 982,39.5 Q984,41 981,46 M982,44 H990 M983,47 H990 M980,50 H990" fill="none" stroke="#A3A9BD" stroke-width="1"/><rect x="997" y="36" width="1" height="20" fill="#8E9CCB"/><path d="M1008.5,39.5 H1017.5 V52 L1013,47.7 L1008.5,52 Z" fill="#BFC6E0" stroke="#1E1E1E" stroke-width="1.6"/><path d="M1031.5,39.5 H1040.5 V52 L1036,47.7 L1031.5,52 V45" fill="none" stroke="#A3A9BD" stroke-width="1"/><path d="M1028,44.5 H1035 M1030.5,42 L1028,44.5 L1030.5,47" fill="none" stroke="#A3A9BD" stroke-width="1"/><path d="M1052.5,39.5 H1061.5 V52 L1057,47.7 L1052.5,52 V45" fill="none" stroke="#A3A9BD" stroke-width="1"/><path d="M1049,44.5 H1056 M1053.5,42 L1056,44.5 L1053.5,47" fill="none" stroke="#A3A9BD" stroke-width="1"/><path d="M1074.5,39.5 H1083.5 V52 L1079,47.7 L1074.5,52 V45" fill="none" stroke="#A3A9BD" stroke-width="1"/><path d="M1071,39 L1074.5,42.5 M1074.5,39 L1071,42.5" fill="none" stroke="#A3A9BD" stroke-width="1"/><rect x="1094" y="49" width="6" height="1.1" fill="#1E1E1E"/><polygon points="1094,51 1100,51 1097,54.6" fill="#1E1E1E"/><circle cx="1763.5" cy="42.8" r="3.3" fill="none" stroke="#1E1E1E" stroke-width="1.2"/><circle cx="1768" cy="42.5" r="3.1" fill="none" stroke="#1E1E1E" stroke-width="1.2"/><path d="M1759.5,51 Q1759.5,46.5 1764,46.5" fill="none" stroke="#1E1E1E" stroke-width="1.2"/><circle cx="1769.6" cy="48.3" r="4" fill="#fff" stroke="#1E1E1E" stroke-width="1.3"/><path d="M1870.5,43 V52 H1883 V48" fill="none" stroke="#1E1E1E" stroke-width="1.1"/><path d="M1873.5,49 Q1874.5,43.5 1880,43.5 H1882" fill="none" stroke="#1E1E1E" stroke-width="1.1"/><path d="M1879.5,40.5 L1883,43.5 L1879.5,46.5" fill="none" stroke="#1E1E1E" stroke-width="1.1"/><path d="M1899.5,39.7 H1908.5 V46.5 L1905.5,49" fill="#C8CDE0" stroke="#1E1E1E" stroke-width="1.1"/><circle cx="1900" cy="46" r="3" fill="#CCD5F0" stroke="#1E1E1E" stroke-width="1.1"/><path d="M1895,52.5 Q1895.5,49.5 1900,49.5 Q1904.5,49.5 1905,52.5" fill="none" stroke="#1E1E1E" stroke-width="1.1"/><rect x="1860" y="77" width="8" height="1.8" fill="#E6EAF8"/><polygon points="1860,80.5 1868,80.5 1864,85" fill="#E6EAF8"/><path d="M1885.50,79.52 L1887.07,79.87 L1887.07,82.13 L1885.50,82.48 L1885.52,82.43 L1886.39,83.79 L1884.79,85.39 L1883.43,84.52 L1883.48,84.50 L1883.13,86.07 L1880.87,86.07 L1880.52,84.50 L1880.57,84.52 L1879.21,85.39 L1877.61,83.79 L1878.48,82.43 L1878.50,82.48 L1876.93,82.13 L1876.93,79.87 L1878.50,79.52 L1878.48,79.57 L1877.61,78.21 L1879.21,76.61 L1880.57,77.48 L1880.52,77.50 L1880.87,75.93 L1883.13,75.93 L1883.48,77.50 L1883.43,77.48 L1884.79,76.61 L1886.39,78.21 L1885.52,79.57 Z" fill="#E6EAF8"/><circle cx="1882" cy="81" r="1.5" fill="#5D6B99"/><path d="M126,82.5 H129.5 M129.5,79 V86 M129.5,80.7 H133.5 V84.3 H129.5" fill="none" stroke="#6A4514" stroke-width="1.1"/><rect x="129.5" y="83.8" width="4.5" height="1.3" fill="#6A4514"/><path d="M144.5,78 L153.5,86 M153.5,78 L144.5,86" stroke="#6A4514" stroke-width="1.2"/><circle cx="48.5" cy="103.5" r="3.8" fill="#CCCDEA" stroke="#1E1E1E" stroke-width="1.1"/><path d="M45.8,106.2 L41,111" stroke="#1E1E1E" stroke-width="1.8"/><path d="M5.5,1059.5 H19.5 V1070.5 H13.5 L11.5,1072.5 L9.5,1070.5 H5.5 Z" fill="#5562A0" stroke="#fff" stroke-width="1.1"/><path d="M1574,1060 V1074 M1570,1064 L1574,1060 L1578,1064" fill="none" stroke="#fff" stroke-width="1.1"/><polygon points="1713,1068.5 1721,1068.5 1717,1064" fill="#fff"/><path d="M1744.5,1061.5 H1757.5 V1072.5 H1744.5 Z M1744.5,1063.5 H1757.5 M1748.5,1065 V1072.5 M1753.5,1065 V1072.5" fill="none" stroke="#fff" stroke-width="1"/><polygon points="1861,1068.5 1869,1068.5 1865,1064" fill="#fff"/><path d="M1891,1071 H1903 L1901.5,1069 V1065 Q1901.5,1060.5 1897,1060.5 Q1892.5,1060.5 1892.5,1065 V1069 Z" fill="none" stroke="#fff" stroke-width="1.1"/><circle cx="1903" cy="1073" r="6" fill="#E51400"/><text x="1903" y="1076.5" text-anchor="middle" font-size="8" font-family="Liberation Sans" fill="#fff">1</text></svg><div class="t" style="left:1589px;top:1059px;color:#fff">Add to Source Control</div><div class="t" style="left:1765px;top:1059px;color:#fff;letter-spacing:-0.3px">Select Repository</div><div class="a" style="left:0;top:1079px;width:1920px;height:1px;background:#000"></div><div class="a" style="left:32px;top:1048px;width:1856px;height:1px;background:#4F5D8E"></div></body></html>
